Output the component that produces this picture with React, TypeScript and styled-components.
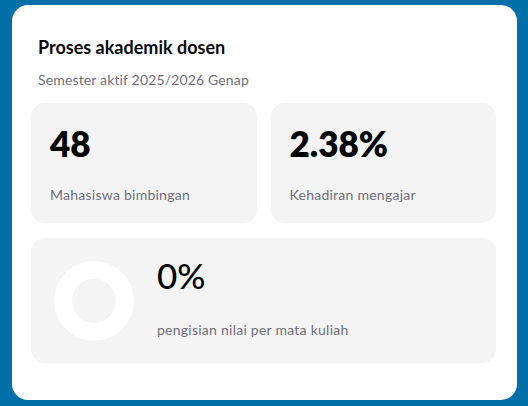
import React from "react";
import styled, { createGlobalStyle } from "styled-components";

const GlobalStyle = createGlobalStyle`
  html, body {
    margin: 0;
    padding: 0;
    background: #0170a8;
  }
  body {
    font-family: "Lato", "Noto Sans", sans-serif;
  }
`;

const Page = styled.div`
  padding: 5px 11px 6px 12px;
`;

const Card = styled.section`
  background: #ffffff;
  border-radius: 16px;
  height: 395px;
  box-sizing: border-box;
  padding: 30px 21px 0 19px;
`;

const Header = styled.header`
  padding-left: 7px;
  margin-bottom: 14px;
`;

const Title = styled.h2`
  margin: 0;
  font-size: 18px;
  font-weight: 700;
  line-height: 24px;
  color: #0b0b12;
`;

const Subtitle = styled.p`
  margin: 12px 0 0;
  font-size: 14px;
  line-height: 18px;
  letter-spacing: 0.15px;
  color: #6f6f7b;
`;

const Grid = styled.div`
  display: grid;
  grid-template-columns: 1fr 1fr;
  gap: 15px 14px;
`;

const Tile = styled.div<{ $wide?: boolean }>`
  grid-column: ${(p) => (p.$wide ? "1 / -1" : "auto")};
  background: #f4f4f4;
  border-radius: 14px;
  height: ${(p) => (p.$wide ? "125px" : "120px")};
  box-sizing: border-box;
  padding: ${(p) => (p.$wide ? "17px 20px 0 22px" : "20px 19px 0 19px")};
  display: ${(p) => (p.$wide ? "flex" : "block")};
  gap: 22px;
`;

const Value = styled.div<{ $light?: boolean }>`
  font-size: 35px;
  line-height: 40px;
  font-weight: ${(p) => (p.$light ? 500 : 800)};
  color: #000;
`;

const Label = styled.div<{ $gap?: number }>`
  margin-top: ${(p) => p.$gap ?? 23}px;
  font-size: 14px;
  line-height: 18px;
  letter-spacing: 0.25px;
  color: #6f6f7b;
`;

const Donut = styled.svg`
  flex: none;
  margin-top: 5px;
`;

function Ring({ percent }: { percent: number }) {
  const r = 31;
  const c = 2 * Math.PI * r;
  return (
    <Donut width="82" height="82" viewBox="0 0 82 82">
      <circle cx="41" cy="41" r={r} fill="none" stroke="#ffffff" strokeWidth="18" />
      <circle
        cx="41"
        cy="41"
        r={r}
        fill="none"
        stroke="#0170a8"
        strokeWidth="18"
        strokeDasharray={`${(c * percent) / 100} ${c}`}
        transform="rotate(-90 41 41)"
      />
    </Donut>
  );
}

export default function App() {
  return (
    <>
      <GlobalStyle />
      <Page>
        <Card>
          <Header>
            <Title>Proses akademik dosen</Title>
            <Subtitle>Semester aktif 2025/2026 Genap</Subtitle>
          </Header>
          <Grid>
            <Tile>
              <Value>48</Value>
              <Label>Mahasiswa bimbingan</Label>
            </Tile>
            <Tile>
              <Value>2.38%</Value>
              <Label>Kehadiran mengajar</Label>
            </Tile>
            <Tile $wide>
              <Ring percent={0} />
              <div>
                <Value $light>0%</Value>
                <Label $gap={26}>pengisian nilai per mata kuliah</Label>
              </div>
            </Tile>
          </Grid>
        </Card>
      </Page>
    </>
  );
}
